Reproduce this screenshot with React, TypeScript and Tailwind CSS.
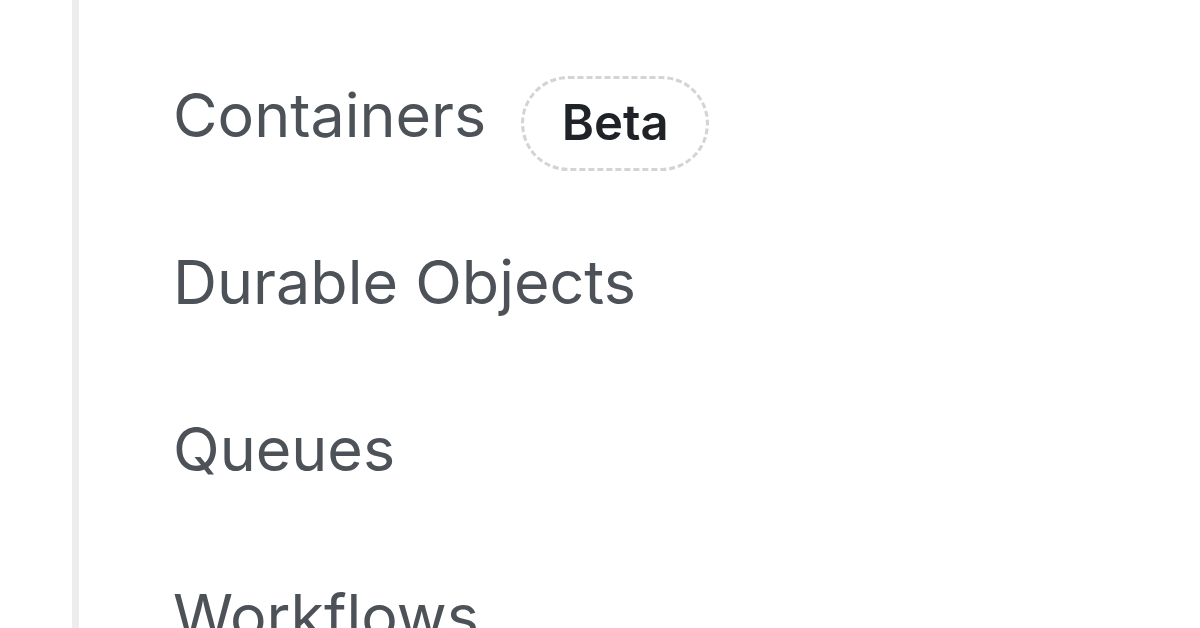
// Sidebar nav, zoomed: compute product links with a beta pill
const items = [
  { label: "Containers", beta: true },
  { label: "Durable Objects", beta: false },
  { label: "Queues", beta: false },
  { label: "Workflows", beta: false },
];

function BetaPill() {
  return (
    <span className="ml-[35px] mt-[15px] flex h-[95px] w-[188px] items-center justify-center rounded-full border-[3px] border-dashed border-[#d4d4d4] text-[49px] font-semibold text-[#1f2328]">
      Beta
    </span>
  );
}

export default function App() {
  return (
    <div
      className="h-[628px] w-[1200px] overflow-hidden bg-white"
      style={{ fontFamily: "Inter, 'Noto Sans', sans-serif" }}
    >
      <div className="ml-[72px] h-full border-l-[7px] border-[#ededed] pl-[94px] pt-[32px]">
        {items.map((item) => (
          <div key={item.label} className="flex h-[167px] items-center">
            <span className="text-[61px] leading-none text-[#4d5259]">
              {item.label}
            </span>
            {item.beta && <BetaPill />}
          </div>
        ))}
      </div>
    </div>
  );
}
